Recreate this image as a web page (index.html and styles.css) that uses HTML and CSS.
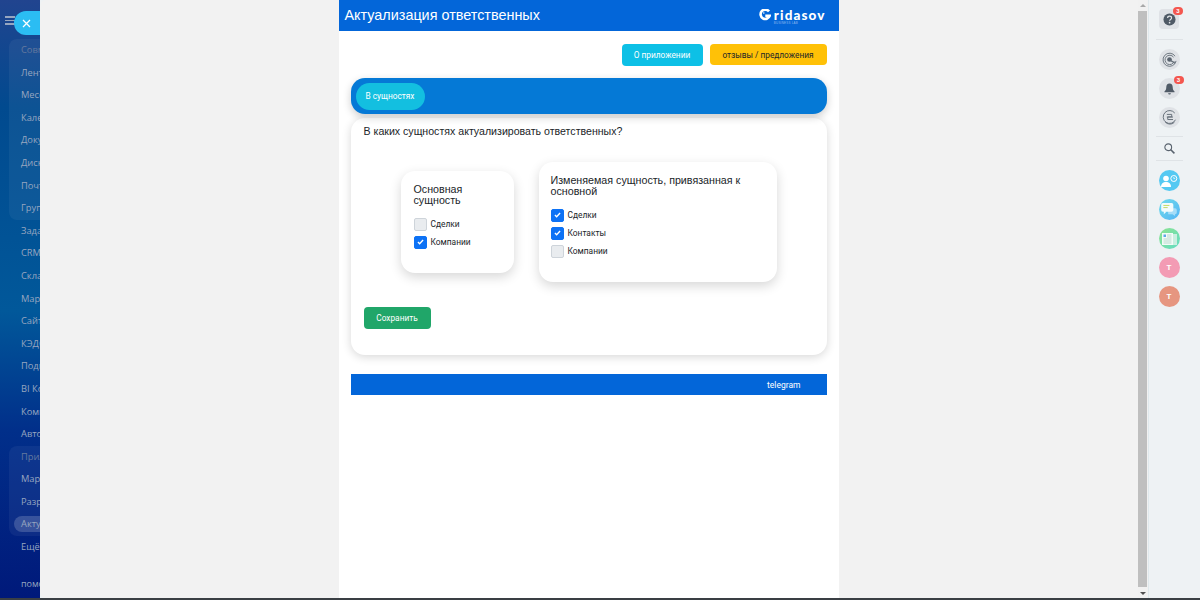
FILE: index.html
```html
<!DOCTYPE html>
<html lang="ru">
<head>
<meta charset="utf-8">
<title>Актуализация ответственных</title>
<link rel="stylesheet" href="styles.css">
</head>
<body>
<div class="desk">
  <nav class="menu">
    <div class="burger"><i></i><i></i><i></i></div>
    <div class="group group-top">
      <div class="item dim">Совместная работа</div>
      <div class="item">Лента</div>
      <div class="item">Мессенджер</div>
      <div class="item">Календарь</div>
      <div class="item">Документы</div>
      <div class="item">Диск</div>
      <div class="item">Почта</div>
      <div class="item">Группы</div>
    </div>
    <div class="plain">
      <div class="item">Задачи</div>
      <div class="item">CRM</div>
      <div class="item">Склад</div>
      <div class="item">Маркетинг</div>
      <div class="item">Сайты</div>
      <div class="item">КЭДО</div>
      <div class="item">Подпись</div>
      <div class="item">BI Конструктор</div>
      <div class="item">Компания</div>
      <div class="item">Автоматизация</div>
    </div>
    <div class="group group-apps">
      <div class="item dim">Приложения</div>
      <div class="item">Маркет</div>
      <div class="item">Разработчикам</div>
      <div class="item active"><span>Актуализация</span></div>
    </div>
    <div class="item more">Ещё</div>
    <div class="item help">помощь</div>
  </nav>

  <button class="close" type="button" aria-label="Закрыть">
    <svg width="9" height="9" viewBox="0 0 9 9"><path d="M1 1l7 7M8 1L1 8" stroke="#fff" stroke-width="1.3" fill="none"/></svg>
  </button>

  <main class="panel">
    <div class="app">
      <header class="app-head">
        <h1>Актуализация ответственных</h1>
        <div class="logo">
          <svg class="logo-mark" width="12" height="12" viewBox="0 0 12 12"><path d="M10 2.400A4.700 4.700 0 1 0 10.700 6.900H6.300" fill="none" stroke="#fff" stroke-width="2.600"/><circle cx="4.800" cy="4" r=".8" fill="#fff"/></svg>
          <div class="logo-text"><b>ridasov</b><small>BUSINESS LAB</small></div>
        </div>
      </header>

      <div class="actions">
        <button class="btn btn-info" type="button">О приложении</button>
        <button class="btn btn-warn" type="button">отзывы / предложения</button>
      </div>

      <div class="tabs"><span class="tab">В сущностях</span></div>

      <section class="card">
        <p class="question">В каких сущностях актуализировать ответственных?</p>
        <div class="boxes">
          <div class="box box-main">
            <h2>Основная сущность</h2>
            <label class="check"><span class="tick"></span>Сделки</label>
            <label class="check"><span class="tick on"><svg width="7" height="6" viewBox="0 0 8 7"><path d="M1 3.600l2 2 4-4.400" fill="none" stroke="#fff" stroke-width="1.600"/></svg></span>Компании</label>
          </div>
          <div class="box box-linked">
            <h2>Изменяемая сущность, привязанная к основной</h2>
            <label class="check"><span class="tick on"><svg width="7" height="6" viewBox="0 0 8 7"><path d="M1 3.600l2 2 4-4.400" fill="none" stroke="#fff" stroke-width="1.600"/></svg></span>Сделки</label>
            <label class="check"><span class="tick on"><svg width="7" height="6" viewBox="0 0 8 7"><path d="M1 3.600l2 2 4-4.400" fill="none" stroke="#fff" stroke-width="1.600"/></svg></span>Контакты</label>
            <label class="check"><span class="tick"></span>Компании</label>
          </div>
        </div>
        <button class="btn btn-save" type="button">Сохранить</button>
      </section>

      <footer class="app-foot"><span>telegram</span></footer>
    </div>
  </main>

  <div class="scrollbar"><div class="arrow"></div><div class="thumb"></div><div class="arrow-down"></div></div>

  <aside class="rail">
    <div class="rail-btn square"><svg width="13" height="13" viewBox="0 0 14 14"><circle cx="7" cy="7" r="6.500" fill="#4f5a66"/><path d="M5 5.400c0-2.600 4.200-2.600 4.200 0 0 1.600-2.100 1.500-2.100 3" fill="none" stroke="#e2e5e8" stroke-width="1.300"/><circle cx="7.100" cy="10.400" r=".9" fill="#e2e5e8"/></svg><em class="badge">3</em></div>
    <hr class="rule">
    <div class="rail-btn round"><svg width="15" height="15" viewBox="0 0 16 16" fill="none" stroke="#66707a"><path d="M14 4.500A7 7 0 1 0 15 9.500" stroke-width="1"/><path d="M12.300 5.500A5 5 0 1 0 13 10" stroke-width="1"/><circle cx="8" cy="8" r="2.500" fill="#59636e" stroke="none"/><path d="M9 9l5 3" stroke-width="1.500"/></svg></div>
    <div class="rail-btn round"><svg width="11" height="12" viewBox="0 0 12 13"><path d="M6 .5c-2.400 0-3.500 1.800-3.500 4 0 2.600-1 3.700-2 4.800v.7h11v-.7c-1-1.100-2-2.200-2-4.800 0-2.200-1.100-4-3.500-4z" fill="#4f5a66"/><path d="M4.500 11h3a1.500 1.500 0 0 1-3 0z" fill="#4f5a66"/></svg><em class="badge">3</em></div>
    <div class="rail-btn round"><svg width="15" height="15" viewBox="0 0 17 17" fill="none" stroke="#66707a" stroke-width="1.100"><path d="M14.500 3.500A7.300 7.300 0 1 0 15.300 11"/><path d="M5.500 5h5.500v2.800H6.500v3h6M5.500 8h7"/><path d="M3.500 13.500A7.300 7.300 0 0 0 14 14"/></svg></div>
    <hr class="rule rule-search">
    <div class="rail-search"><svg width="11" height="11" viewBox="0 0 13 13" fill="none" stroke="#59636e"><circle cx="5" cy="5" r="4" stroke-width="1.300"/><path d="M8 8l4.300 4.300" stroke-width="1.800"/></svg></div>
    <hr class="rule rule-low">
    <div class="chat c-blue"><svg width="17" height="12" viewBox="0 0 17 12"><circle cx="5" cy="3.500" r="2.800" fill="#fff"/><path d="M0 12c0-3.500 2-5 5-5s5 1.500 5 5z" fill="#fff"/><circle cx="12.800" cy="3.500" r="3" fill="none" stroke="#fff" stroke-width="1"/><path d="M12.800 2v1.600h1.400" fill="none" stroke="#fff" stroke-width=".7"/></svg></div>
    <div class="chat c-sky"><svg width="16" height="13" viewBox="0 0 18 15"><path d="M8 6h8a2 2 0 0 1 2 2v3a2 2 0 0 1-2 2v2l-3-2H8z" fill="#a6ddf8"/><rect x="0" y="0" width="14" height="10" rx="2" fill="#f2fbfd"/><path d="M3 9v4l3-3z" fill="#f2fbfd"/><path d="M2.500 2.800h7" stroke="#c1d95a" stroke-width="1.100"/><path d="M2.500 5.300h5" stroke="#c1d95a" stroke-width="1.100"/></svg></div>
    <div class="chat c-green"><svg width="15" height="12" viewBox="0 0 15 12"><rect x="11" y="1" width="4" height="11" fill="#c9efe0"/><rect x="0" y="0" width="11" height="12" fill="#f3fbf7"/><rect x="1.500" y="1.500" width="2.500" height="2.500" fill="#5da7e8"/><path d="M5 2h4.500M5 4h4.500M1.500 6h8M1.500 8h8M1.500 10h8" stroke="#b9d9cf"/></svg></div>
    <div class="chat c-pink">Т</div>
    <div class="chat c-salmon">Т</div>
  </aside>
</div>
</body>
</html>
```
FILE: styles.css
```css
* { box-sizing: border-box; }

html, body {
  margin: 0;
  height: 100%;
  overflow: hidden;
}

body {
  font-family: "Liberation Sans", Arial, sans-serif;
  color: #212529;
  background: #3a3f44;
}

.desk {
  position: relative;
  display: flex;
  width: 1200px;
  height: 598px;
  overflow: hidden;
  background: #eef2f4;
}

/* left menu, dimmed by the slider overlay */
.menu {
  flex: 0 0 40px;
  width: 40px;
  padding-top: 39px;
  overflow: hidden;
  white-space: nowrap;
  font-family: "Open Sans", sans-serif;
  font-size: 9.3px;
  color: #97a6c0;
  background: linear-gradient(180deg, #21448f 0, #014a8f 18%, #01589a 52%, #012f8a 72%, #00197a 100%);
}

.burger {
  position: absolute;
  top: 16px;
  left: 5px;
  display: grid;
  gap: 2px;
  width: 10px;
}

.burger i {
  display: block;
  height: 1.5px;
  background: #97a6c0;
}

.group {
  width: 220px;
  margin-left: 9px;
  border-radius: 8px;
  background: rgba(255, 255, 255, 0.05);
}

.item {
  width: 220px;
  height: 22.6px;
  padding-left: 12px;
  line-height: 22.6px;
}

.plain .item,
.more,
.help {
  padding-left: 21px;
}

.dim {
  color: #64799f;
}

.active {
  padding-top: 3px;
}

.active span {
  display: block;
  width: 100px;
  height: 16px;
  margin-left: -7px;
  padding-left: 7px;
  border-radius: 8px;
  line-height: 16px;
  background: rgba(255, 255, 255, 0.18);
}

.help {
  margin-top: 14.5px;
  font-size: 9px;
}

.close {
  position: absolute;
  top: 11px;
  left: 14px;
  display: flex;
  align-items: center;
  width: 40px;
  height: 24px;
  padding: 0 0 0 8px;
  border: 0;
  border-radius: 12px;
  background: #2bbdf3;
}

.panel {
  position: relative;
  z-index: 1;
  flex: 0 0 1098px;
  display: flex;
  justify-content: center;
  padding-right: 2px;
  overflow: hidden;
  border-radius: 6px 0 0 6px;
  background: #f2f2f2;
}

.app {
  width: 500px;
  height: 100%;
  margin-left: 1px;
  background: #fff;
}

.app-head {
  display: flex;
  align-items: center;
  justify-content: space-between;
  height: 31px;
  padding: 0 13px 0 6px;
  color: #fff;
  background: #0366d9;
}

.app-head h1 {
  margin: 0;
  font-size: 14.4px;
  font-weight: 400;
  line-height: 31px;
}

.logo {
  display: flex;
  align-items: flex-start;
  gap: 3px;
  padding-top: 3px;
}

.logo-text {
  display: flex;
  flex-direction: column;
}

.logo-text b {
  font-family: "Lato", sans-serif;
  font-size: 13.5px;
  font-weight: 900;
  line-height: 12px;
  letter-spacing: 1.1px;
}

.logo-text small {
  margin-top: 1px;
  font-size: 3px;
  line-height: 3px;
  color: #8fb9ee;
  letter-spacing: 0.2px;
}

.actions {
  display: flex;
  justify-content: flex-end;
  gap: 7px;
  height: 47px;
  padding: 13px 12px 0 0;
}

.btn {
  height: 22px;
  padding: 0;
  border: 0;
  border-radius: 4px;
  font-family: "Roboto", sans-serif;
  font-size: 8.3px;
  line-height: 22px;
}

.btn-info {
  width: 81px;
  color: #fff;
  background: #0dc0e6;
}

.btn-warn {
  width: 117px;
  height: 21px;
  color: #212529;
  background: #ffc107;
}

.tabs {
  position: relative;
  z-index: 1;
  display: flex;
  align-items: center;
  height: 36px;
  margin: 0 12px;
  padding-left: 5px;
  border-radius: 14px;
  background: #0579d6;
  box-shadow: 0 3px 8px rgba(0, 0, 0, 0.2);
}

.tab {
  width: 69px;
  height: 27px;
  border-radius: 14px;
  font-family: "Roboto", sans-serif;
  font-size: 8.3px;
  line-height: 27px;
  text-align: center;
  color: #fff;
  background: #13bfe0;
}

.card {
  height: 237px;
  margin: 4px 12px 0;
  padding: 7px 13px 0;
  border-radius: 14px;
  background: #fff;
  box-shadow: 0 2px 10px rgba(0, 0, 0, 0.16);
}

.question {
  margin: 0;
  font-size: 10.6px;
  line-height: 13px;
  color: #212529;
}

.boxes {
  display: flex;
  align-items: center;
  gap: 25px;
  height: 120px;
  margin: 24px 0 25px 37px;
}

.box {
  border-radius: 14px;
  background: #fff;
  box-shadow: 0 4px 12px rgba(0, 0, 0, 0.16);
}

.box h2 {
  margin: 0 0 9px;
  font-size: 10.7px;
  font-weight: 400;
  line-height: 11px;
  color: #212529;
}

.box-main {
  width: 113px;
  height: 102px;
  padding: 13px 13px 0;
}

.box-linked {
  width: 238px;
  height: 120px;
  padding: 13px 13px 0 12px;
}

.check {
  display: flex;
  align-items: center;
  gap: 4px;
  height: 18px;
  font-family: "Roboto", sans-serif;
  font-size: 8.4px;
  color: #212529;
}

.tick {
  display: flex;
  align-items: center;
  justify-content: center;
  width: 13px;
  height: 13px;
  border: 1px solid #ced4da;
  border-radius: 2px;
  background: #e9ecef;
}

.tick.on {
  border-color: #0d72f5;
  background: #0d72f5;
}

.btn-save {
  display: block;
  width: 67px;
  height: 22px;
  color: #fff;
  background: #20a669;
}

.app-foot {
  display: flex;
  align-items: center;
  justify-content: flex-end;
  height: 21px;
  margin: 19px 12px 0;
  padding-right: 26px;
  font-family: "Roboto", sans-serif;
  font-size: 8.5px;
  color: #fff;
  background: #0366d9;
}

.scrollbar {
  position: relative;
  z-index: 1;
  flex: 0 0 10px;
  display: flex;
  flex-direction: column;
  padding-right: 1px;
  background: #f1f1f1;
}

.arrow {
  flex: 0 0 11px;
}

.arrow::after {
  content: "";
  display: block;
  width: 0;
  margin: 4px auto 0;
  border: 3px solid transparent;
  border-top: 0;
  border-bottom: 3px solid #a8a8a8;
}

.thumb {
  height: 576px;
  background: #bfbfbf;
}

.arrow-down {
  width: 0;
  margin: 5px auto 0;
  border: 3px solid transparent;
  border-bottom: 0;
  border-top: 3px solid #505050;
}

.rail {
  flex: 1;
  display: flex;
  flex-direction: column;
  align-items: center;
  padding: 9px 11px 0 0;
  border-left: 1px solid #dfe8ec;
  background: #eef2f4;
}

.rail-btn {
  position: relative;
  display: flex;
  align-items: center;
  justify-content: center;
  flex: none;
  background: #dfe2e6;
}

.square {
  width: 20px;
  height: 20px;
  border-radius: 4px;
}

.round {
  width: 21px;
  height: 21px;
  margin-bottom: 8px;
  border-radius: 50%;
}

.badge {
  position: absolute;
  top: -2px;
  right: -4px;
  min-width: 10px;
  height: 8px;
  border-radius: 4px;
  font-size: 6px;
  font-style: normal;
  font-weight: 700;
  line-height: 8px;
  text-align: center;
  color: #fff;
  background: #f4574f;
}

.rule {
  flex: none;
  width: 27px;
  height: 1px;
  margin: 10px 0 9px;
  border: 0;
  background: #dfe3e6;
}

.rule-search {
  margin: 0;
}

.rail-search {
  flex: none;
  display: flex;
  align-items: center;
  justify-content: center;
  height: 23px;
}

.rule-low {
  margin: 0 0 9px;
}

.chat {
  flex: none;
  display: flex;
  align-items: center;
  justify-content: center;
  width: 21px;
  height: 21px;
  margin-bottom: 8px;
  border-radius: 50%;
  font-size: 8px;
  font-weight: 700;
  color: #fff;
}

.c-blue { background: #55c9f2; }
.c-sky { background: linear-gradient(135deg, #6fdcea, #55b4f5); }
.c-green { background: linear-gradient(135deg, #8ce38f, #63dcc4); }
.c-pink { background: #f39bb4; }
.c-salmon { background: #e69680; }
```
